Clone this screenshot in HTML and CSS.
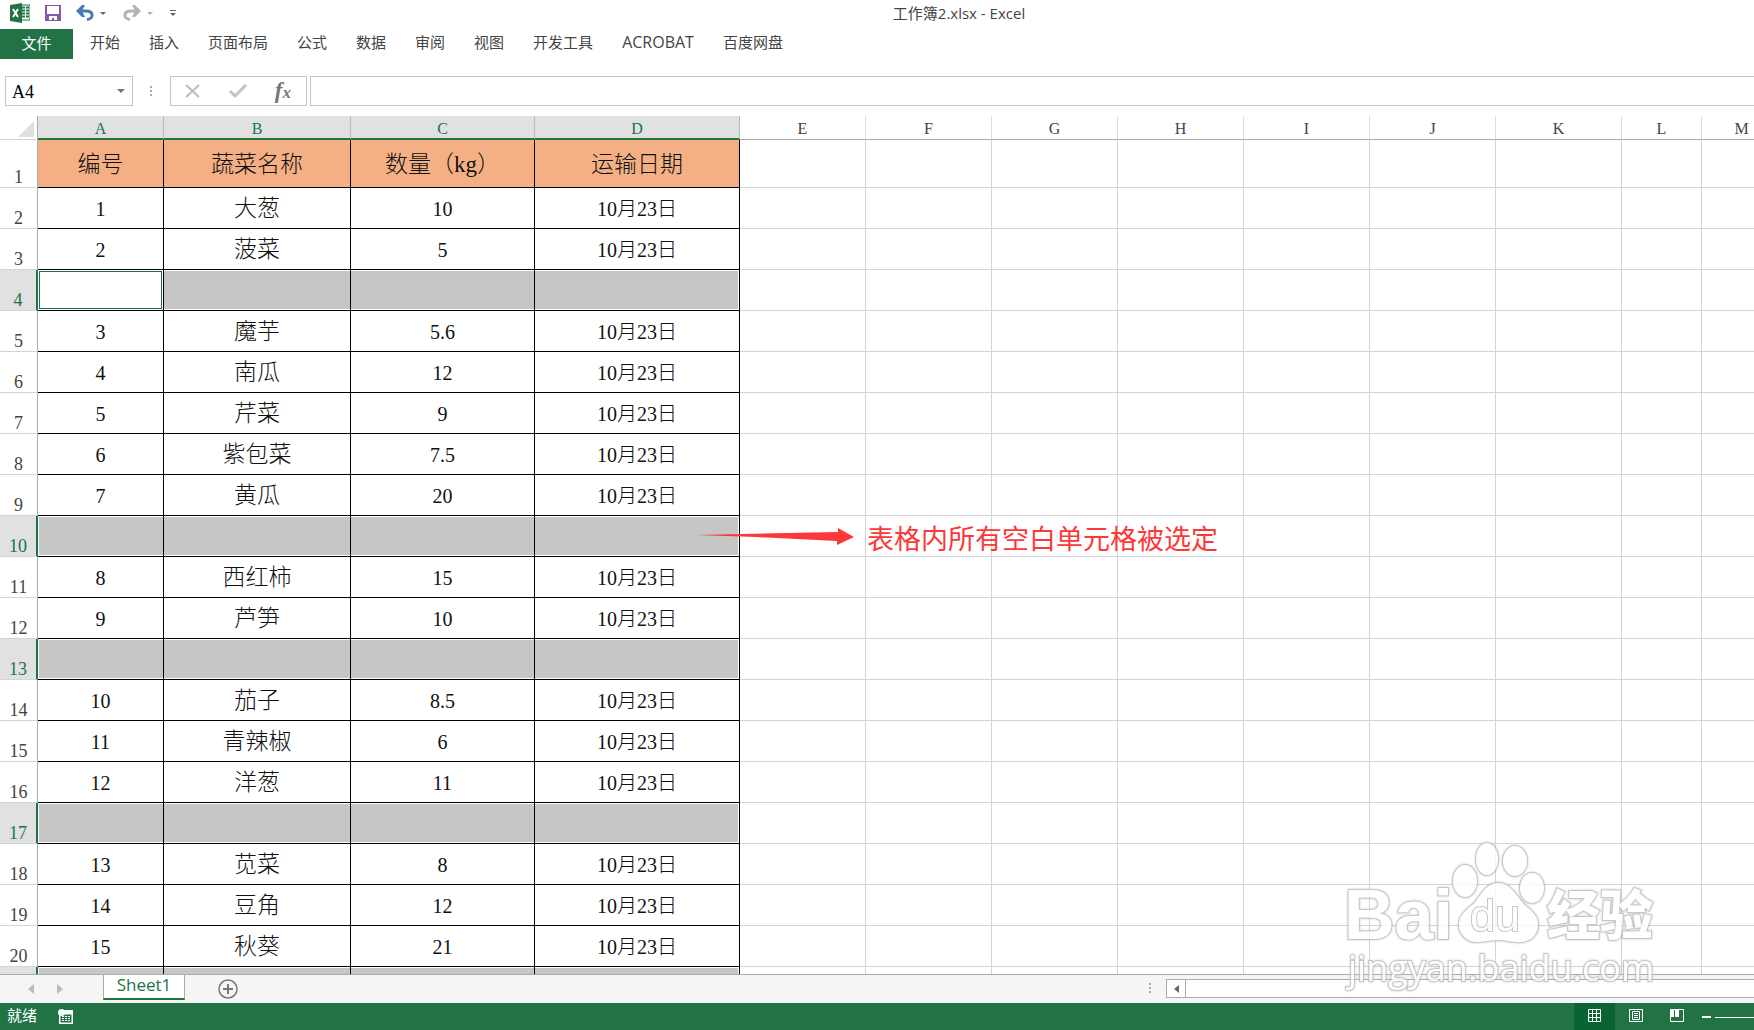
FILE: index.html
```html
<!DOCTYPE html>
<html lang="zh-CN">
<head>
<meta charset="utf-8">
<title>工作簿2.xlsx - Excel</title>
<link rel="stylesheet" href="styles.css">
</head>
<body>
<header class="titlebar">
  <div class="quick">
    <svg class="logo" width="20" height="20" viewBox="0 0 20 20"><path d="M11 2h9v15h-9z" fill="#fff" stroke="#217346"/><path d="M12 4.500h3M16 4.500h3M12 7.500h3M16 7.500h3M12 10.500h3M16 10.500h3M12 13.500h3M16 13.500h3" stroke="#217346" stroke-width="2"/><path d="M0 2 12 0v20L0 18z" fill="#217346"/><path d="m3 6 5 8M8 6l-5 8" stroke="#fff" stroke-width="2"/></svg>
    <button class="tool save" aria-label="保存"><svg width="16" height="16" viewBox="0 0 16 16"><path d="M0 0h16v16H0z" fill="#8a57ad"/><path d="M2 1h12v8H2zM4 11h8v4H9v-2H7v2H4z" fill="#fff"/></svg></button>
    <button class="tool" aria-label="撤消"><svg width="18" height="16" viewBox="0 0 18 16"><path d="M4 6h6c8 0 8 8 1 8.500" fill="none" stroke="#457cb5" stroke-width="3"/><path d="M0 6 6 0h3L6 6l3 6H6z" fill="#457cb5"/></svg><svg width="6" height="3"><path d="M0 0h6L3 3z" fill="#666"/></svg></button>
    <button class="tool" aria-label="恢复"><svg width="18" height="16" viewBox="0 0 18 16"><path d="M14 6H8c-8 0-8 8-1 8.500" fill="none" stroke="#b5b3b3" stroke-width="3"/><path d="M18 6 12 0H9l3 6-3 6h3z" fill="#b5b3b3"/></svg><svg width="6" height="3"><path d="M0 0h6L3 3z" fill="#b5b3b3"/></svg></button>
    <button class="tool" aria-label="自定义"><svg width="6" height="6"><path d="M0 0h6v1H0zM0 3h6L3 6z" fill="#666"/></svg></button>
  </div>
  <h1 class="title">工作簿2.xlsx - Excel</h1>
</header>
<nav class="ribbon">
  <button class="file">文件</button>
  <button class="tab">开始</button><button class="tab">插入</button><button class="tab">页面布局</button><button class="tab">公式</button><button class="tab">数据</button><button class="tab">审阅</button><button class="tab">视图</button><button class="tab">开发工具</button><button class="tab latin">ACROBAT</button><button class="tab">百度网盘</button>
</nav>
<section class="formula">
  <div class="namebox"><input class="name" aria-label="名称框" value="A4"><svg width="8" height="4"><path d="M0 0h8L4 4z" fill="#777"/></svg></div>
  <svg class="grip" width="2" height="11"><path d="M0 0h2v2H0zM0 4h2v2H0zM0 8h2v2H0z" fill="#aaa"/></svg>
  <div class="actions">
    <button class="tool" aria-label="取消"><svg width="16" height="14" viewBox="0 0 16 14"><path d="m1 1 13 12M14 1 1 13" stroke="#bdbdbd" stroke-width="2"/></svg></button>
    <button class="tool" aria-label="输入"><svg width="18" height="14" viewBox="0 0 18 14"><path d="m1 7 5 5L17 1" fill="none" stroke="#c4c4c4" stroke-width="3"/></svg></button>
    <button class="tool fx" aria-label="插入函数">f<span class="fx-x">x</span></button>
  </div>
  <input class="entry" aria-label="编辑栏">
</section>
<main class="sheet">
  <table class="grid">
    <colgroup><col class="w-head"><col class="w-std"><col class="w-b"><col class="w-c"><col class="w-d"><col class="w-std"><col class="w-std"><col class="w-std"><col class="w-std"><col class="w-std"><col class="w-std"><col class="w-std"><col class="w-small"><col class="w-small"></colgroup>
    <thead><tr><th class="corner"><svg width="16" height="16"><path d="M16 0v16H0z" fill="#dfdfdf"/></svg></th><th class="on">A</th><th class="on">B</th><th class="on">C</th><th class="on">D</th><th>E</th><th>F</th><th>G</th><th>H</th><th>I</th><th>J</th><th>K</th><th>L</th><th>M</th></tr></thead>
    <tbody id="rows"></tbody>
  </table>
  <div class="note">
    <svg width="160" height="20" viewBox="0 0 160 20"><path d="M0 7 142 4V0l16 9-17 8v-4L60 9z" fill="#fd3838"/></svg>
    <span>表格内所有空白单元格被选定</span>
  </div>
</main>
<footer class="bottom">
  <div class="sheets">
    <div class="arrows"><button class="tool" aria-label="上一张"><svg width="6" height="10"><path d="M6 0v10L0 5z" fill="#bbb"/></svg></button><button class="tool" aria-label="下一张"><svg width="6" height="10"><path d="M0 0v10l6-5z" fill="#bbb"/></svg></button></div>
    <button class="sheet-tab">Sheet1</button>
    <button class="tool add" aria-label="新工作表"><svg width="20" height="20" viewBox="0 0 20 20"><circle cx="10" cy="10" r="9" fill="none" stroke="#777" stroke-width="1.500"/><path d="M5 10h10M10 5v10" stroke="#777" stroke-width="2"/></svg></button>
    <svg class="split" width="2" height="11"><path d="M0 0h2v2H0zM0 4h2v2H0zM0 8h2v2H0z" fill="#aaa"/></svg>
    <div class="scroll"><button class="tool scroll-left" aria-label="向左滚动"><svg width="5" height="8"><path d="M5 0v8L0 4z" fill="#666"/></svg></button></div>
  </div>
  <div class="status">
    <span class="ready">就绪</span>
    <svg class="macro" width="15" height="15" viewBox="0 0 15 15"><path d="M1 1h14v14H1z" fill="#fff"/><path d="M2.500 5.500h11v8h-11z" fill="#217346"/><path d="M4 7.500h9M4 9.500h9M4 11.500h9" stroke="#fff" stroke-dasharray="2 1"/><circle cx="3.500" cy="3.500" r="3.500" fill="#fff"/></svg>
    <div class="views">
      <button class="view active" aria-label="普通"><svg width="13" height="13" viewBox="0 0 13 13"><path d="M.5.5h12v12H.5zM4.500 0v13M8.500 0v13M0 4.500h13M0 8.500h13" fill="none" stroke="#fff"/></svg></button>
      <button class="view" aria-label="页面布局"><svg width="14" height="13" viewBox="0 0 14 13"><path d="M.5.5h13v12H.5zM3.500 2.500h7v8h-7zM5 4.500h4M5 6.500h4M5 8.500h4" fill="none" stroke="#fff"/></svg></button>
      <button class="view" aria-label="分页预览"><svg width="14" height="13" viewBox="0 0 14 13"><path d="M.5.5h13v12H.5z" fill="none" stroke="#fff"/><path d="M1 1h3v7H1zM5 1h4v7H5z" fill="#fff"/></svg></button>
    </div>
    <svg class="zoom" width="52" height="2"><path d="M0 0h9v2H0zM13 1h39v1H13z" fill="#fff"/></svg>
  </div>
</footer>
<div class="watermark" aria-hidden="true">
  <svg width="320" height="156" viewBox="0 0 320 156">
    <g class="mark">
      <text class="mark-latin" x="-3" y="99">Bai</text>
      <path d="M151 43c-14 0-17 15-27 23-9 7-12 12-12 19 0 10 9 18 20 17 9-1 12-2 20-2s13 3 22 2c10 0 17-8 17-17 0-8-4-12-12-19-9-8-14-23-28-23z"/>
      <ellipse cx="118" cy="41" rx="12" ry="16"/><ellipse cx="140" cy="19" rx="11" ry="16"/><ellipse cx="168" cy="21" rx="12" ry="15"/><ellipse cx="185" cy="48" rx="12" ry="15"/>
      <text class="mark-du" x="123" y="91">du</text>
      <text class="mark-cjk" x="200" y="95">经验</text>
      <text class="mark-url" x="1" y="141">jingyan.baidu.com</text>
    </g>
  </svg>
</div>
<script src="rows.js"></script>
</body>
</html>
```
FILE: rows.js
```js
const rows = [
  ["编号", "蔬菜名称", "数量（kg）", "运输日期"],
  ["1", "大葱", "10"], ["2", "菠菜", "5"], null,
  ["3", "魔芋", "5.6"], ["4", "南瓜", "12"], ["5", "芹菜", "9"],
  ["6", "紫包菜", "7.5"], ["7", "黄瓜", "20"], null,
  ["8", "西红柿", "15"], ["9", "芦笋", "10"], null,
  ["10", "茄子", "8.5"], ["11", "青辣椒", "6"], ["12", "洋葱", "11"], null,
  ["13", "苋菜", "8"], ["14", "豆角", "12"], ["15", "秋葵", "21"], null
];
const body = document.getElementById("rows");
rows.forEach((data, i) => {
  const tr = body.insertRow();
  tr.className = i === 0 ? "heading" : data ? "record" : "blank";
  const th = document.createElement("th");
  th.textContent = i < 20 ? i + 1 : "";
  tr.append(th);
  for (let c = 0; c < 13; c++) {
    const td = tr.insertCell();
    if (c < 4) {
      td.className = "data";
      if (data) td.textContent = c === 3 && i > 0 ? "10月23日" : data[c];
      if (i === 3 && c === 0) td.className = "data active-cell";
    }
  }
});
```
FILE: styles.css
```css
* { box-sizing: border-box; }
body {
  margin: 0;
  height: 100vh;
  display: flex;
  flex-direction: column;
  overflow: hidden;
  background: #fff;
  color: #444;
  font: 15px/20px "Open Sans", "Noto Sans CJK SC", sans-serif;
}
button, input { font: inherit; color: inherit; border: 0; padding: 0; background: none; }
svg { display: block; flex: none; }
.tool { display: flex; align-items: center; gap: 6px; }
.titlebar { display: flex; height: 29px; flex: none; }
.quick { display: flex; align-items: center; width: 164px; height: 26px; padding-left: 10px; flex: none; gap: 17px; }
.save { margin: 0 -2px; }
.title { flex: 1; margin: 0; padding-top: 3px; font-size: 15px; line-height: 20px; font-weight: 400; text-align: center; }
.ribbon { display: flex; height: 30px; flex: none; gap: 29px; }
.file { width: 73px; margin-right: -12px; padding-bottom: 2px; background: #217346; color: #fff; }
.tab { padding-bottom: 4px; white-space: nowrap; }
.latin { font-size: 16px; }
.formula { display: flex; align-items: center; height: 30px; flex: none; margin: 17px 0 10px 5px; }
.namebox { display: flex; align-items: center; width: 128px; height: 30px; border: 1px solid #c6c6c6; padding: 0 7px 0 6px; }
.name { flex: 1; min-width: 0; padding-top: 2px; color: #000; font: 18px/24px "Liberation Serif", serif; }
.grip { margin: 0 18px 0 17px; }
.actions { display: flex; align-items: center; justify-content: space-between; width: 137px; height: 30px; border: 1px solid #c6c6c6; padding: 0 15px 0 14px; margin-right: 3px; }
.fx { gap: 0; font: italic 700 23px/24px "Liberation Serif", serif; color: #777; }
.fx-x { font-size: 17px; padding-top: 4px; }
.entry { flex: 1; min-width: 0; height: 30px; border: 1px solid #c6c6c6; border-right: 0; }
.sheet { flex: 1; min-height: 0; position: relative; overflow: hidden; border-bottom: 1px solid #ababab; }
.grid { table-layout: fixed; width: 1782px; border-collapse: separate; border-spacing: 0; }
.w-head { width: 38px; }
.w-std { width: 126px; }
.w-b { width: 187px; }
.w-c { width: 184px; }
.w-d { width: 205px; }
.w-small { width: 80px; }
th, td { padding: 0; border-right: 1px solid #d4d4d4; border-bottom: 1px solid #d4d4d4; }
th { font: 18px/20px "Liberation Serif", serif; }
thead th { height: 24px; padding-top: 3px; font-size: 16px; line-height: 18px; border-bottom-color: #ababab; border-right-color: #dcdcdc; }
thead .on { color: #217346; background: #e1e1e1; border-bottom: 2px solid #217346; border-right-color: #bbb; }
thead .corner { padding: 0; border-right-color: #ababab; border-bottom-color: #d4d4d4; }
.corner svg { margin: 2px 0 0 18px; }
tbody tr { height: 41px; }
tbody .heading { height: 48px; }
tbody th { vertical-align: bottom; border-right-color: #ababab; }
.data { text-align: center; color: #111; border-color: #000; padding-top: 2px; font: 300 20px/24px "Liberation Serif", "Noto Sans CJK SC", serif; }
.data:nth-child(3), .heading .data { font-size: 23px; }
.heading .data { background: #f4b084; }
.blank th { color: #217346; background: #e1e1e1; border-right: 2px solid #217346; }
.blank .data { background: #c6c6c6 content-box; padding: 1px 0; }
.blank .data:nth-child(5) { padding-right: 1px; }
.blank .data:nth-child(2) { padding-left: 1px; }
.blank .active-cell { background: #fff; box-shadow: inset 0 0 0 1px #fff, inset 0 0 0 2px #217346; }
.note { position: absolute; left: 696px; top: 406px; display: flex; align-items: center; gap: 11px; color: #fd3838; font: 27px/32px "Noto Sans CJK SC", sans-serif; white-space: nowrap; }
.bottom { flex: none; }
.sheets { display: flex; height: 28px; background: #f5f5f5; }
.arrows { display: flex; gap: 23px; width: 103px; padding-left: 28px; }
.sheet-tab { width: 82px; height: 25px; border: 1px solid #ababab; border-top: 0; border-bottom: 2px solid #217346; background: #fff; color: #217346; font-size: 17px; line-height: 20px; padding-bottom: 4px; }
.add { margin-left: 33px; }
.split { margin: 8px 15px 0 auto; }
.scroll { width: 588px; height: 19px; margin-top: 4px; border: 1px solid #ababab; border-right: 0; background: #fff; }
.scroll-left { width: 19px; height: 17px; justify-content: center; border-right: 1px solid #ababab; }
.status { display: flex; align-items: center; height: 27px; background: #217346; color: #fff; padding-left: 7px; }
.ready { padding-bottom: 3px; }
.macro { margin-left: 21px; }
.views { display: flex; margin-left: auto; height: 27px; }
.view { display: flex; align-items: center; justify-content: center; width: 41px; padding-bottom: 2px; }
.active { background: #0a6332; }
.zoom { margin-left: 5px; }
.watermark { position: absolute; right: 87px; bottom: 34px; opacity: .8; }
.watermark svg { overflow: visible; }
.mark { fill: #fff; stroke: #bbb; stroke-width: 2px; paint-order: stroke; filter: drop-shadow(0 0 1px #bbb); }
.mark-latin { font: 700 70px "Liberation Sans", sans-serif; }
.mark-du { font: 45px "Liberation Sans", sans-serif; }
.mark-cjk { font: 900 53px "Noto Sans CJK SC", sans-serif; }
.mark-url { font: 36px "Open Sans", sans-serif; }
```
